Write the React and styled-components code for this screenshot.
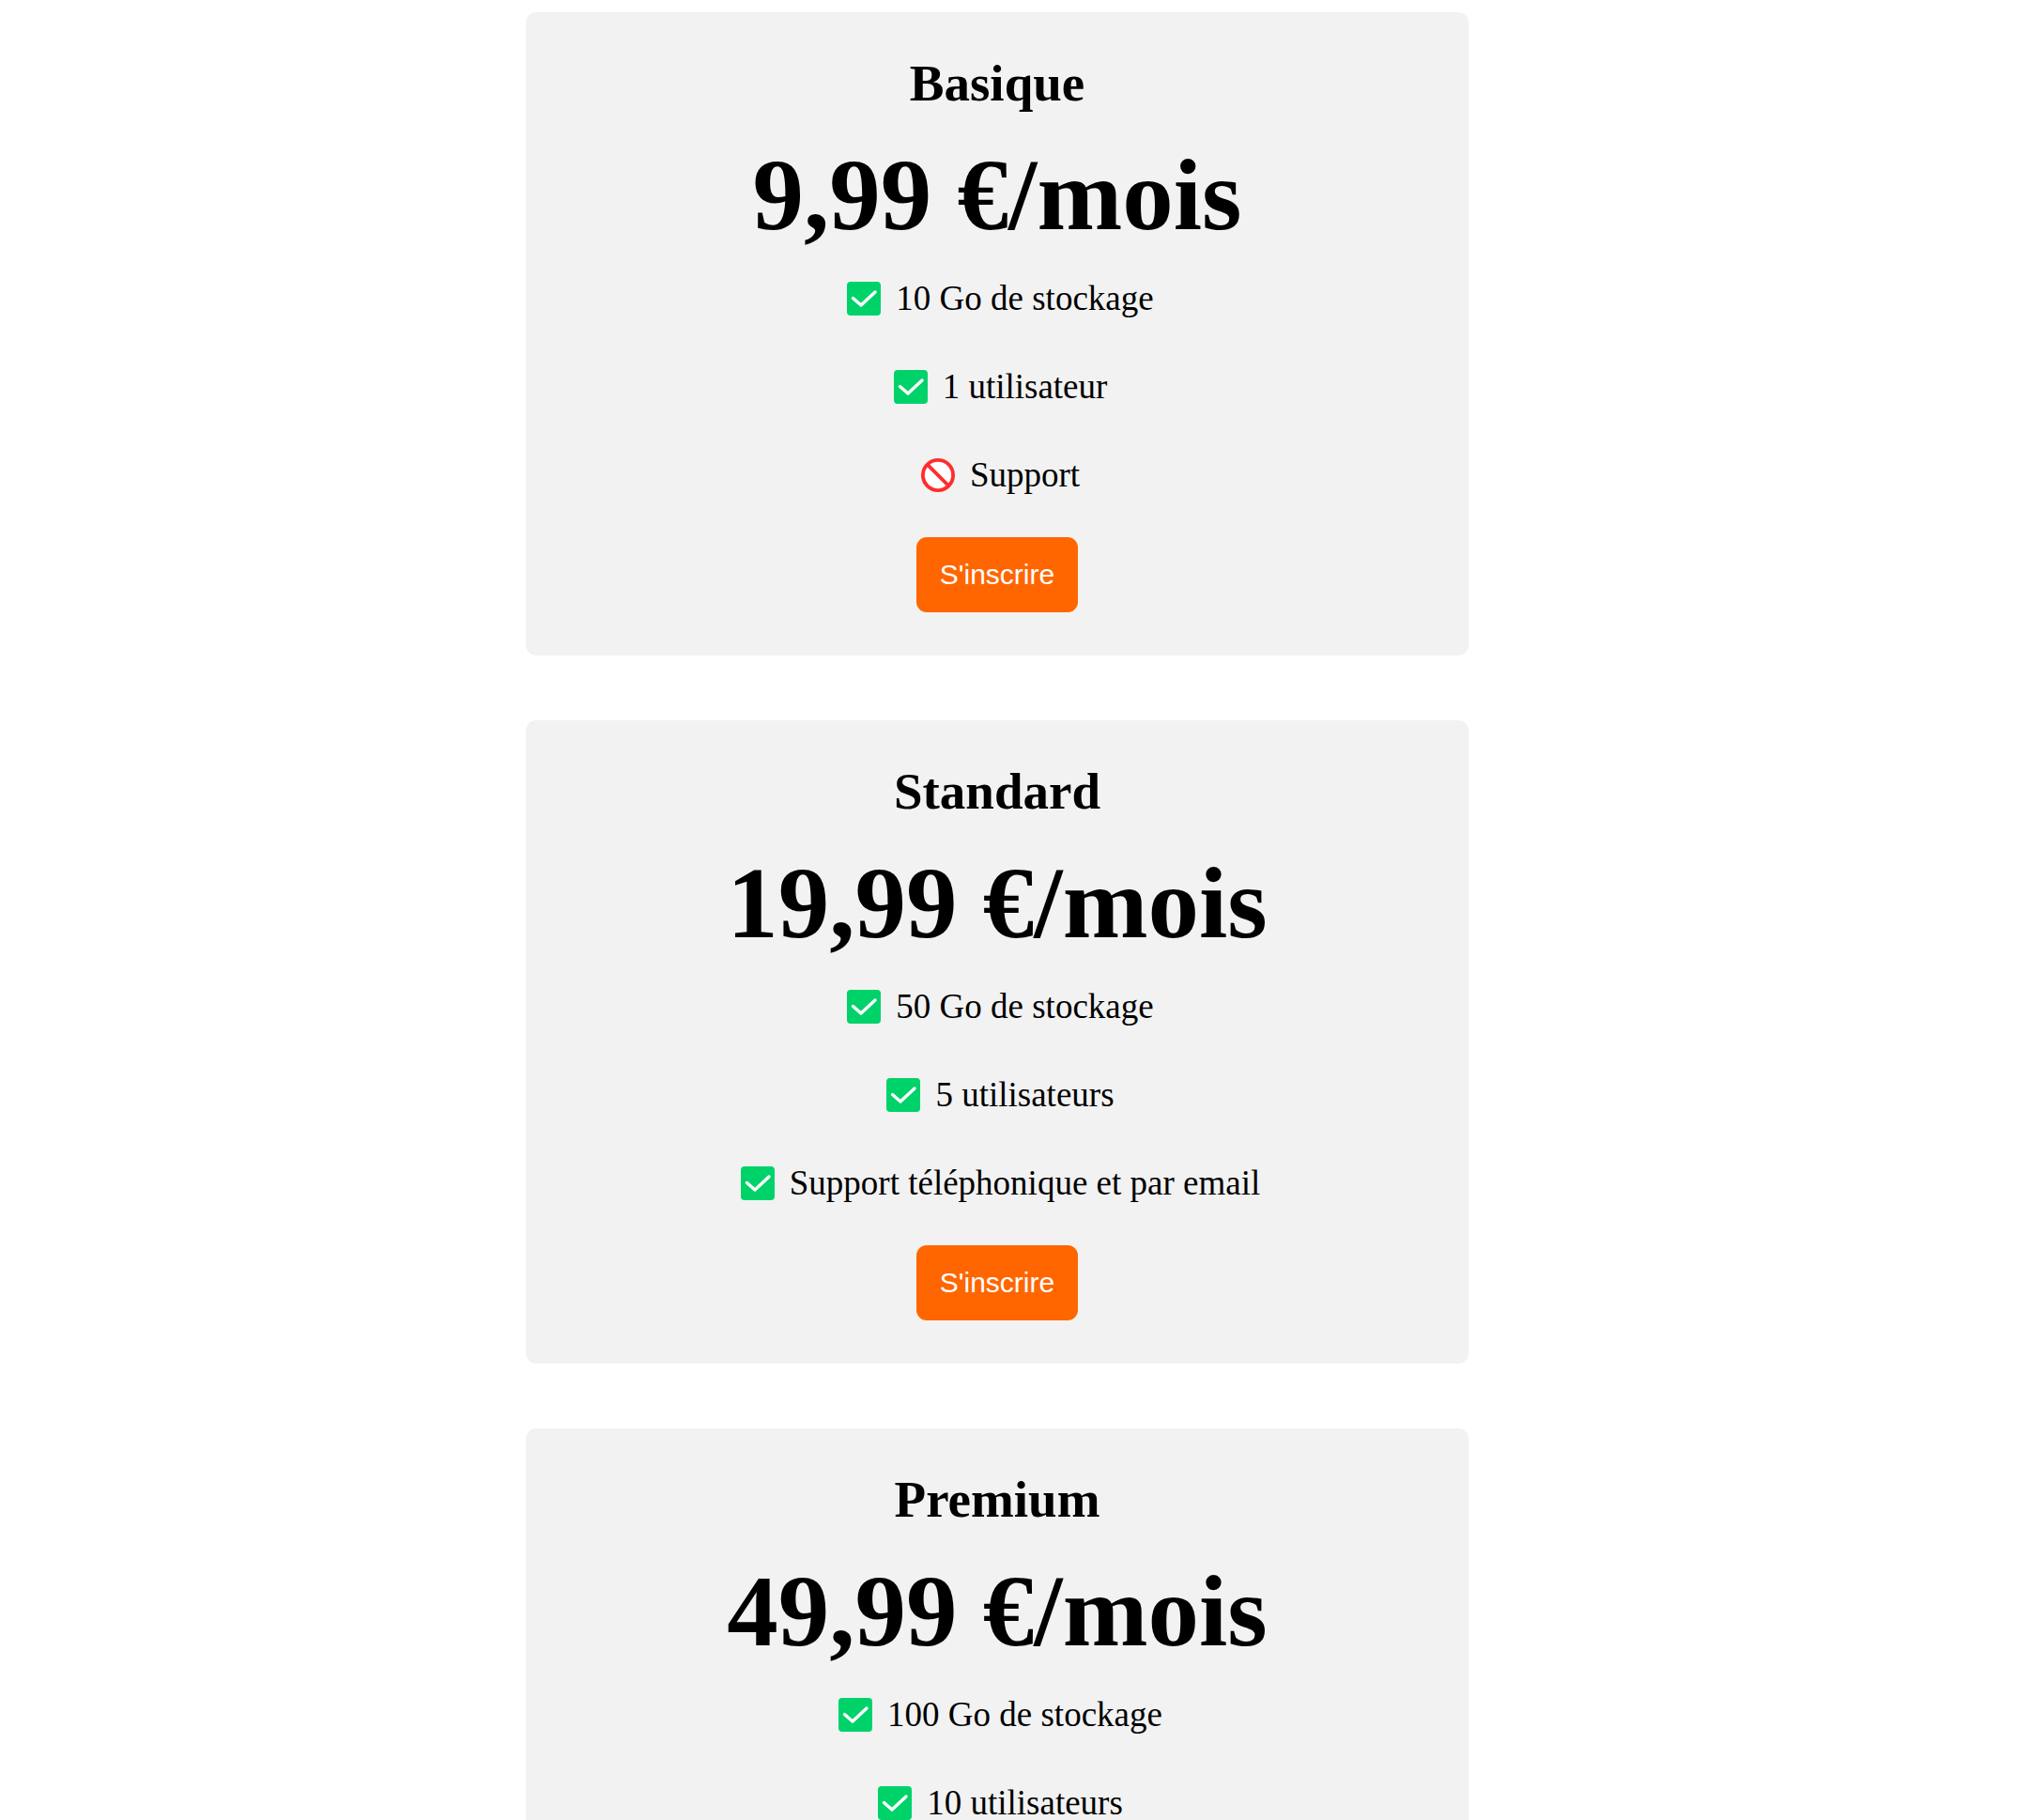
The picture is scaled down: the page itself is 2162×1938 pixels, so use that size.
import React from "react";
import styled, { createGlobalStyle } from "styled-components";

const GlobalStyle = createGlobalStyle`
  body {
    margin: 0;
    background: #ffffff;
    color: #000000;
    font-family: "Liberation Serif", "Times New Roman", Times, serif;
  }
`;

const Page = styled.main`
  box-sizing: border-box;
  height: 100vh;
  overflow: hidden;
  display: flex;
  flex-direction: column;
  align-items: center;
  gap: 69px;
  padding: 13px 38px 0 0;
`;

const Card = styled.section`
  box-sizing: border-box;
  flex: none;
  width: 100%;
  max-width: 1004px;
  padding: 46px;
  border-radius: 11px;
  background: #f2f2f2;
  display: flex;
  flex-direction: column;
  align-items: center;
  text-align: center;
`;

const PlanName = styled.h2`
  margin: 0 0 28px;
  font-size: 55px;
  line-height: 60px;
  font-weight: 700;
`;

const Price = styled.p`
  margin: 0 0 31px;
  font-size: 109px;
  line-height: 122px;
  font-weight: 700;
`;

const Features = styled.ul`
  list-style: none;
  margin: 0;
  padding: 0;
  display: flex;
  flex-direction: column;
  align-items: center;
  gap: 58px;
`;

const Feature = styled.li`
  display: flex;
  align-items: center;
  gap: 9px;
  font-size: 37px;
  line-height: 36px;
`;

const Icon = styled.svg`
  flex: none;
  width: 50px;
  height: 36px;
`;

const SignUp = styled.button`
  margin-top: 48px;
  padding: 23px 25px;
  border: 0;
  border-radius: 11px;
  background: #ff6600;
  color: #ffffff;
  font-family: "Liberation Sans", Arial, sans-serif;
  font-size: 30px;
  line-height: 34px;
  cursor: pointer;
`;

function IncludedIcon() {
  return (
    <Icon viewBox="0 0 50 36" role="img" aria-label="Inclus">
      <rect x="7" y="0" width="36" height="36" rx="4" fill="#00d26a" />
      <path
        d="M13.5 17.5L22 25L37 11"
        fill="none"
        stroke="#ffffff"
        strokeWidth="3.4"
        strokeLinecap="round"
        strokeLinejoin="round"
      />
    </Icon>
  );
}

function ExcludedIcon() {
  return (
    <Icon viewBox="0 0 50 36" role="img" aria-label="Non inclus">
      <circle cx="25" cy="18" r="16.1" fill="#ffffff" stroke="#ff2d2d" strokeWidth="3.8" />
      <path d="M13.6 6.6L36.4 29.4" stroke="#ff2d2d" strokeWidth="3.8" />
    </Icon>
  );
}

const plans = [
  {
    name: "Basique",
    price: "9,99 €/mois",
    features: [
      { text: "10 Go de stockage", included: true },
      { text: "1 utilisateur", included: true },
      { text: "Support", included: false },
    ],
    action: "S'inscrire",
  },
  {
    name: "Standard",
    price: "19,99 €/mois",
    features: [
      { text: "50 Go de stockage", included: true },
      { text: "5 utilisateurs", included: true },
      { text: "Support téléphonique et par email", included: true },
    ],
    action: "S'inscrire",
  },
  {
    name: "Premium",
    price: "49,99 €/mois",
    features: [
      { text: "100 Go de stockage", included: true },
      { text: "10 utilisateurs", included: true },
    ],
  },
];

export default function App() {
  return (
    <>
      <GlobalStyle />
      <Page>
        {plans.map((plan) => (
          <Card key={plan.name}>
            <PlanName>{plan.name}</PlanName>
            <Price>{plan.price}</Price>
            <Features>
              {plan.features.map((feature) => (
                <Feature key={feature.text}>
                  {feature.included ? <IncludedIcon /> : <ExcludedIcon />}
                  <span>{feature.text}</span>
                </Feature>
              ))}
            </Features>
            {plan.action && <SignUp type="button">{plan.action}</SignUp>}
          </Card>
        ))}
      </Page>
    </>
  );
}
